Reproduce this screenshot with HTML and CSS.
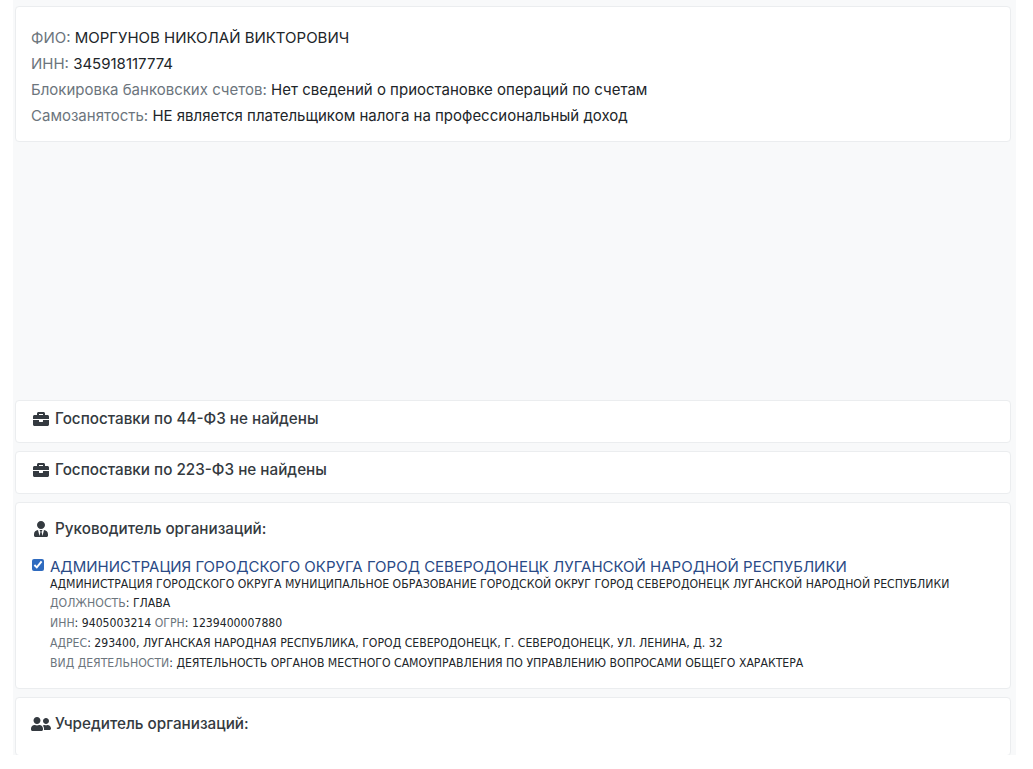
FILE: index.html
```html
<!DOCTYPE html>
<html lang="ru">
<head>
  <meta charset="UTF-8">
  <meta name="viewport" content="width=device-width, initial-scale=1.0">
  <title>МОРГУНОВ НИКОЛАЙ ВИКТОРОВИЧ</title>
  <link rel="stylesheet" href="styles.css">
</head>
<body>

  <main class="page">
    <section class="card card-info">
      <div class="info-row"><span class="muted">ФИО:</span> МОРГУНОВ НИКОЛАЙ ВИКТОРОВИЧ</div>
      <div class="info-row"><span class="muted">ИНН:</span> 345918117774</div>
      <div class="info-row"><span class="muted">Блокировка банковских счетов:</span> Нет сведений о приостановке операций по счетам</div>
      <div class="info-row"><span class="muted">Самозанятость:</span> НЕ является плательщиком налога на профессиональный доход</div>
    </section>

    <div class="blank"></div>

    <section class="card card-short">
      <h2 class="card-title">
        <svg class="icon" viewBox="0 0 512 512"><path d="M320 336c0 8.840-7.160 16-16 16h-96c-8.840 0-16-7.160-16-16v-48H0v144c0 25.600 22.400 48 48 48h416c25.600 0 48-22.400 48-48V288H320v48zm144-208h-80V80c0-25.600-22.400-48-48-48H176c-25.600 0-48 22.400-48 48v48H48c-25.600 0-48 22.400-48 48v80h512v-80c0-25.600-22.400-48-48-48zm-144 0H192V96h128v32z"/></svg>
        Госпоставки по 44-ФЗ не найдены
      </h2>
    </section>

    <section class="card card-short">
      <h2 class="card-title">
        <svg class="icon" viewBox="0 0 512 512"><path d="M320 336c0 8.840-7.160 16-16 16h-96c-8.840 0-16-7.160-16-16v-48H0v144c0 25.600 22.400 48 48 48h416c25.600 0 48-22.400 48-48V288H320v48zm144-208h-80V80c0-25.600-22.400-48-48-48H176c-25.600 0-48 22.400-48 48v48H48c-25.600 0-48 22.400-48 48v80h512v-80c0-25.600-22.400-48-48-48zm-144 0H192V96h128v32z"/></svg>
        Госпоставки по 223-ФЗ не найдены
      </h2>
    </section>

    <section class="card card-org">
      <h2 class="card-title">
        <svg class="icon" viewBox="0 0 448 512"><path d="M224 256c70.700 0 128-57.300 128-128S294.700 0 224 0 96 57.300 96 128s57.300 128 128 128zm95.800 32.600L272 480l-32-136 32-56h-96l32 56-32 136-47.800-191.400C56.900 292 0 350.300 0 422.400V464c0 26.500 21.500 48 48 48h352c26.500 0 48-21.500 48-48v-41.600c0-72.100-56.900-130.400-128.200-133.800z"/></svg>
        Руководитель организаций:
      </h2>
      <div class="org">
        <input class="org-check" type="checkbox" checked>
        <div class="org-body">
          <div class="org-link">АДМИНИСТРАЦИЯ ГОРОДСКОГО ОКРУГА ГОРОД СЕВЕРОДОНЕЦК ЛУГАНСКОЙ НАРОДНОЙ РЕСПУБЛИКИ</div>
          <div class="org-line">АДМИНИСТРАЦИЯ ГОРОДСКОГО ОКРУГА МУНИЦИПАЛЬНОЕ ОБРАЗОВАНИЕ ГОРОДСКОЙ ОКРУГ ГОРОД СЕВЕРОДОНЕЦК ЛУГАНСКОЙ НАРОДНОЙ РЕСПУБЛИКИ</div>
          <div class="org-line"><span class="muted">ДОЛЖНОСТЬ</span>: ГЛАВА</div>
          <div class="org-line"><span class="muted">ИНН</span>: 9405003214 <span class="muted">ОГРН</span>: 1239400007880</div>
          <div class="org-line"><span class="muted">АДРЕС</span>: 293400, ЛУГАНСКАЯ НАРОДНАЯ РЕСПУБЛИКА, ГОРОД СЕВЕРОДОНЕЦК, Г. СЕВЕРОДОНЕЦК, УЛ. ЛЕНИНА, Д. 32</div>
          <div class="org-line"><span class="muted">ВИД ДЕЯТЕЛЬНОСТИ</span>: ДЕЯТЕЛЬНОСТЬ ОРГАНОВ МЕСТНОГО САМОУПРАВЛЕНИЯ ПО УПРАВЛЕНИЮ ВОПРОСАМИ ОБЩЕГО ХАРАКТЕРА</div>
        </div>
      </div>
    </section>

    <section class="card card-founder">
      <h2 class="card-title">
        <svg class="icon icon-wide" viewBox="0 0 640 512"><path d="M192 256c61.900 0 112-50.100 112-112S253.900 32 192 32 80 82.100 80 144s50.100 112 112 112zm76.800 32h-8.300c-20.800 10-43.900 16-68.500 16s-47.600-6-68.500-16h-8.300C51.600 288 0 339.600 0 403.200V432c0 26.500 21.500 48 48 48h288c26.500 0 48-21.500 48-48v-28.800c0-63.600-51.600-115.200-115.200-115.200zM480 256c53 0 96-43 96-96s-43-96-96-96-96 43-96 96 43 96 96 96zm48 32h-3.800c-13.900 4.800-28.600 8-44.200 8s-30.300-3.200-44.200-8H432c-20.400 0-39.200 5.900-55.700 15.400 24.400 26.300 39.700 61.200 39.700 99.800v38.400c0 2.200-.5 4.300-.6 6.400H592c26.500 0 48-21.500 48-48 0-61.900-50.100-112-112-112z"/></svg>
        Учредитель организаций:
      </h2>
    </section>
  </main>

</body>
</html>
```
FILE: styles.css
```css
body {
  margin: 0;
  background-color: #fff;
  color: #212529;
  font-family: Inter, "Liberation Sans", sans-serif;
}

.page {
  width: 1003px;
  height: 755px;
  margin-left: 13px;
  padding: 6px 6px 0 2px;
  box-sizing: border-box;
  background-color: #f8f9fa;
}

.card {
  box-sizing: border-box;
  width: 996px;
  background-color: #fff;
  border: 1px solid #ebedef;
  border-radius: 4px;
  margin-bottom: 8px;
}

.card-info {
  height: 136px;
  padding: 18px 15px 0;
  margin-bottom: 0;
}

.info-row {
  font-size: 15px;
  line-height: 26px;
}

.muted {
  color: #6c757d;
}

.blank {
  height: 258px;
}

.card-short {
  height: 43px;
  padding: 8px 17px 0;
}

.card-title {
  display: flex;
  align-items: center;
  gap: 6px;
  margin: 0;
  font-size: 15.25px;
  font-weight: 500;
  line-height: 20px;
  color: #343a40;
}

.icon {
  width: 16px;
  height: 16px;
  flex: none;
  fill: #343a40;
}

.icon-wide {
  width: 20px;
  margin-left: -2px;
  margin-right: -2px;
}

.card-org {
  height: 187px;
  padding: 16px 17px 0;
}

.org {
  display: flex;
  align-items: flex-start;
  gap: 6px;
  margin-top: 18px;
  margin-left: -2px;
}

.org-check {
  width: 12px;
  height: 12px;
  margin: 2px 0 0 1px;
  accent-color: #2f6bbf;
}

.org-link {
  font-size: 15px;
  line-height: 19px;
  color: #2a4a86;
}

.org-line {
  font-family: "DejaVu Sans", sans-serif;
  font-stretch: condensed;
  font-size: 12.15px;
  line-height: 20px;
}

.org-link + .org-line {
  line-height: 16px;
  margin-bottom: 1px;
}

.card-founder {
  height: 59px;
  padding: 16px 17px 0;
  margin-bottom: 0;
}
```
